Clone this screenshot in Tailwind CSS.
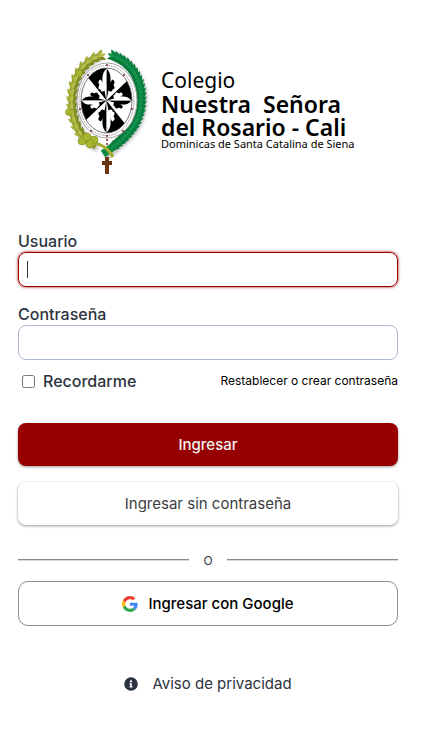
<!DOCTYPE html>
<html lang="es">
<head>
    <meta charset="UTF-8">
    <meta name="viewport" content="width=device-width, initial-scale=1.0">
    <title>Ingresar</title>
    <script src="https://cdn.jsdelivr.net/npm/@tailwindcss/browser@4"></script>
</head>
<body class="bg-white pl-[18px] pr-[26px] font-['Inter',sans-serif] text-[#2d3340]">
    <main class="mx-auto max-w-md">
        <header class="flex justify-center gap-2 pt-12">
            <svg class="h-32 w-[90px] shrink-0" viewBox="0 0 90 128" role="img" aria-label="Escudo">
                <defs>
                    <clipPath id="oval"><ellipse cx="0" cy="0" rx="25.5" ry="32.5"/></clipPath>
                    <g id="arm">
                        <path d="M0 0L2 -10C4 -8 6 -9 6 -11C9 -11 8 -14 7 -16C9 -18 8 -20 6 -21C5 -20 4 -19 4 -17C4 -22 5 -27 0 -32Z" fill="#000"/>
                        <path d="M0 0L-2 -10C-4 -8 -6 -9 -6 -11C-9 -11 -8 -14 -7 -16C-9 -18 -8 -20 -6 -21C-5 -20 -4 -19 -4 -17C-4 -22 -5 -27 0 -32Z" fill="#fff"/>
                    </g>
                    <filter id="soft" x="-20%" y="-20%" width="140%" height="140%"><feGaussianBlur stdDeviation="1.5"/></filter>
                </defs>
                <path d="M52 9C71 17 81 35 80 54C79 75 70 89 42 108M39 8C20 14 11 34 11 54C11 76 19 92 35 100" fill="none" stroke="#888" stroke-width="9" opacity=".45" filter="url(#soft)"/>
                <!-- branches -->
                <path id="right" d="M50 8C70 15 79 34 78 53C77 73 68 87 40 106" fill="none" stroke="#0c8a45" stroke-width="8"/>
                <path id="left" d="M38 8C18 14 9 33 9 53C9 74 17 90 33 98" fill="none" stroke="#8c9a28" stroke-width="7"/>
                <g id="leaves"></g>
                <!-- shield -->
                <ellipse cx="44" cy="52.5" rx="30" ry="37.5" fill="#fff" stroke="#a5a5a5" stroke-width="1"/>
                <ellipse cx="43.5" cy="52.5" rx="27.5" ry="35" fill="none" stroke="#8d7878" stroke-width="1" stroke-dasharray="1 1"/>
                <g transform="translate(43.5 52.5)">
                    <g clip-path="url(#oval)">
                        <path d="M0 0V-40H-32ZM0 0H40V-38ZM0 0V40H32ZM0 0H-40V38Z" fill="#000"/>
                    </g>
                    <ellipse rx="25.5" ry="32.5" fill="none" stroke="#555" stroke-width=".8"/>
                    <use href="#arm"/>
                    <use href="#arm" transform="rotate(90) scale(1 .78)"/>
                    <use href="#arm" transform="rotate(180)"/>
                    <use href="#arm" transform="rotate(270) scale(1 .78)"/>
                </g>
                <g fill="#7d1f2b">
                    <circle cx="44" cy="17" r="1"/><circle cx="25" cy="27" r="1"/><circle cx="61" cy="27" r="1"/>
                    <circle cx="17" cy="61" r="1"/><circle cx="69" cy="61" r="1"/><circle cx="28" cy="83" r="1"/>
                    <circle cx="60" cy="83" r="1"/><circle cx="44" cy="88" r="1"/><circle cx="44" cy="92" r="1"/><circle cx="44" cy="96" r="1"/>
                </g>
                <!-- stems, olives and cross -->
                <path d="M28 95C38 95 46 101 50 109" fill="none" stroke="#a5ad32" stroke-width="3"/>
                <g fill="#a8b52f" stroke="#77851f" stroke-width=".5">
                    <circle cx="16" cy="25" r="3.5"/><circle cx="6" cy="64" r="3.5"/>
                    <circle cx="19" cy="93" r="4"/><circle cx="24" cy="89" r="4"/><circle cx="31" cy="92" r="4"/><circle cx="27" cy="96" r="4"/>
                </g>
                <path d="M42 109H46V113H49V117H46V126H42V117H39V113H42Z" fill="#6b3512"/>
            </svg>
            <div class="w-[192px] pt-5 font-['Noto_Sans','Open_Sans',sans-serif] text-black">
                <p class="text-[21px] leading-6">Colegio</p>
                <p class="text-[23px] leading-6 font-semibold whitespace-pre">Nuestra  Señora</p>
                <p class="text-[23px] leading-[22px] font-semibold whitespace-nowrap">del Rosario - Cali</p>
                <p class="text-[11px] leading-3 whitespace-nowrap">Dominicas de Santa Catalina de Siena</p>
            </div>
        </header>

        <form class="mt-[55px]" onsubmit="return false">
            <label for="usuario" class="block text-[16px] leading-5 font-medium">Usuario</label>
            <div class="relative mt-px">
                <input id="usuario" type="text" class="block h-[35px] w-full rounded-lg border border-[#960000] px-2 text-[15px] shadow-[0_0_3px_#960000] outline-none">
                <span class="absolute top-[9px] left-[9px] h-[17px] w-px bg-[#2d3340]"></span>
            </div>

            <label for="contrasena" class="mt-[17px] block text-[16px] leading-5 font-medium">Contraseña</label>
            <input id="contrasena" type="password" class="mt-px block h-[35px] w-full rounded-lg border border-[#a9b8d0] px-2 text-[15px] outline-none">

            <div class="mt-[11px] flex items-center justify-between">
                <label class="flex items-center gap-2 pl-1 text-[16px] leading-5 font-medium">
                    <input type="checkbox" class="size-[13px]">
                    Recordarme
                </label>
                <a href="#" class="text-[12px] leading-5 text-black">Restablecer o crear contraseña</a>
            </div>

            <button type="submit" class="mt-8 block h-[43px] w-full rounded-lg bg-[#960000] pt-0.5 text-[15px] font-medium text-[#f3f3f3] shadow-[0_1px_3px_#00000066]">Ingresar</button>
            <button type="button" class="mt-4 block h-[43px] w-full rounded-lg bg-white pt-0.5 text-[15px] text-[#3d3d3d] shadow-[0_1px_3px_#00000066]">Ingresar sin contraseña</button>

            <div class="mt-6 flex items-center text-[12px] leading-5">
                <hr class="grow border-t border-b border-t-[#8a8a8a] border-b-[#d8d8d8]">
                <span class="w-[38px] pt-0.5 text-center">O</span>
                <hr class="grow border-t border-b border-t-[#8a8a8a] border-b-[#d8d8d8]">
            </div>

            <button type="button" class="mt-[10px] flex h-[45px] w-full items-center justify-center gap-[10px] rounded-[10px] border border-[#8c8c8c] bg-white text-[15px] font-medium text-black">
                <svg class="size-4" viewBox="0 0 48 48">
                    <path fill="#EA4335" d="M24 9.5c3.54 0 6.71 1.22 9.21 3.6l6.85-6.85C35.9 2.38 30.47 0 24 0 14.62 0 6.51 5.38 2.56 13.22l7.98 6.19C12.43 13.72 17.74 9.5 24 9.5z"/>
                    <path fill="#4285F4" d="M46.98 24.55c0-1.57-.15-3.09-.38-4.55H24v9.02h12.94c-.58 2.96-2.26 5.48-4.78 7.18l7.73 6c4.51-4.18 7.09-10.36 7.09-17.65z"/>
                    <path fill="#FBBC05" d="M10.53 28.59c-.48-1.45-.76-2.99-.76-4.59s.27-3.14.76-4.59l-7.98-6.19C.92 16.46 0 20.12 0 24c0 3.88.92 7.54 2.56 10.78l7.97-6.19z"/>
                    <path fill="#34A853" d="M24 48c6.48 0 11.93-2.13 15.89-5.81l-7.73-6c-2.15 1.45-4.92 2.3-8.16 2.3-6.26 0-11.57-4.22-13.47-9.91l-7.98 6.19C6.51 42.62 14.62 48 24 48z"/>
                </svg>
                <span class="pt-0.5">Ingresar con Google</span>
            </button>
        </form>

        <a href="#" class="mt-12 flex items-center justify-center gap-[14px] pb-12 text-[15px] leading-5">
            <svg class="size-[14px]" viewBox="0 0 512 512" fill="currentColor">
                <path d="M256 8a248 248 0 1 0 0 496 248 248 0 1 0 0-496zm0 110a42 42 0 1 1 0 84 42 42 0 1 1 0-84zm56 254c0 7-5 12-12 12h-88c-7 0-12-5-12-12v-24c0-7 5-12 12-12h12v-64h-12c-7 0-12-5-12-12v-24c0-7 5-12 12-12h64c7 0 12 5 12 12v100h12c7 0 12 5 12 12z"/>
            </svg>
            Aviso de privacidad
        </a>
    </main>

    <script>
        // Leaves along each branch of the wreath
        const leaves = document.getElementById("leaves");
        function addLeaves(id, colors, step, spread) {
            const branch = document.getElementById(id);
            const total = branch.getTotalLength();
            for (let i = total - 10; i >= 0; i -= step) {
                const p = branch.getPointAtLength(i);
                const q = branch.getPointAtLength(i + 1);
                const angle = Math.atan2(p.y - q.y, p.x - q.x) * 180 / Math.PI;
                [-spread, spread, 0].forEach((turn, n) => {
                    const leaf = document.createElementNS("http://www.w3.org/2000/svg", "path");
                    leaf.setAttribute("d", "M0 0C3 -3 6 -2 9 0C6 2 3 2 0 0Z");
                    leaf.setAttribute("fill", colors[n]);
                    leaf.setAttribute("transform", `translate(${p.x} ${p.y}) rotate(${angle + turn})`);
                    leaves.appendChild(leaf);
                });
            }
        }
        addLeaves("left", ["#a3ad35", "#7d8c22", "#b5bd4c"], 7, 38);
        addLeaves("right", ["#0a7a3a", "#0b7f40", "#159450"], 4, 35);
    </script>
</body>
</html>
